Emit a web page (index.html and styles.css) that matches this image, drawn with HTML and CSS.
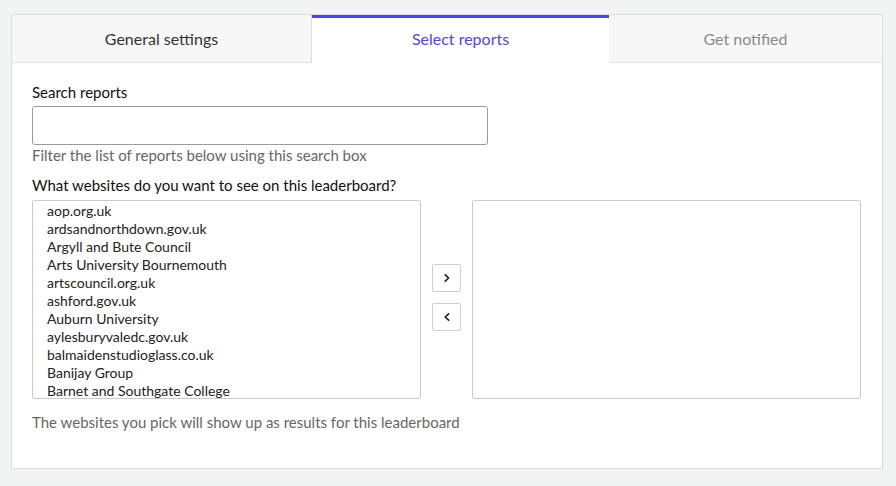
FILE: index.html
```html
<!DOCTYPE html>
<html>
<head>
<meta charset="utf-8">
<link rel="stylesheet" href="styles.css">
</head>
<body>
<div class="card">
  <div class="tabs">
    <div class="tab tab-first">General settings</div>
    <div class="tab tab-active">Select reports</div>
    <div class="tab tab-muted">Get notified</div>
  </div>
  <div class="content">
    <div class="label">Search reports</div>
    <div class="input"></div>
    <div class="help">Filter the list of reports below using this search box</div>
    <div class="label label-2">What websites do you want to see on this leaderboard?</div>
    <div class="picker">
      <div class="listbox">
        <div class="item">aop.org.uk</div>
        <div class="item">ardsandnorthdown.gov.uk</div>
        <div class="item">Argyll and Bute Council</div>
        <div class="item">Arts University Bournemouth</div>
        <div class="item">artscouncil.org.uk</div>
        <div class="item">ashford.gov.uk</div>
        <div class="item">Auburn University</div>
        <div class="item">aylesburyvaledc.gov.uk</div>
        <div class="item">balmaidenstudioglass.co.uk</div>
        <div class="item">Banijay Group</div>
        <div class="item">Barnet and Southgate College</div>
      </div>
      <div class="buttons">
        <div class="btn"><svg width="10" height="10" viewBox="0 0 10 10"><path d="M3.2 1.8 L6.6 5 L3.2 8.2" fill="none" stroke="#222" stroke-width="1.7" stroke-linecap="round" stroke-linejoin="round"/></svg></div>
        <div class="btn"><svg width="10" height="10" viewBox="0 0 10 10"><path d="M6.6 1.8 L3.2 5 L6.6 8.2" fill="none" stroke="#222" stroke-width="1.7" stroke-linecap="round" stroke-linejoin="round"/></svg></div>
      </div>
      <div class="listbox"></div>
    </div>
    <div class="help footer">The websites you pick will show up as results for this leaderboard</div>
  </div>
</div>
</body>
</html>
```
FILE: styles.css
```css
html, body {
  margin: 0;
  padding: 0;
}
body {
  background: #f2f3f3;
  font-family: Lato, "Open Sans", sans-serif;
  width: 896px;
  height: 486px;
  overflow: hidden;
}
.card {
  margin: 14px 0 0 11px;
  width: 870px;
  height: 453px;
  background: #fff;
  border: 1px solid #dcdcdc;
}
.tabs {
  display: flex;
  height: 48px;
}
.tab {
  display: flex;
  align-items: center;
  justify-content: center;
  font-size: 16px;
  color: #333;
  background: #f7f7f7;
  border-bottom: 1px solid #e3e3e3;
  box-sizing: border-box;
}
.tab-first {
  width: 300px;
  border-right: 1px solid #dcdcdc;
}
.tab-active {
  width: 297px;
  background: #fff;
  color: #4f46dc;
  border-top: 3px solid #4f46dc;
  border-bottom: none;
  padding-bottom: 4px;
}
.tab-muted {
  flex: 1;
  color: #8a8a8a;
}
.content {
  padding: 19px 20px 0 20px;
}
.label {
  font-size: 15px;
  line-height: 20px;
  color: #111;
}
.label-2 {
  margin-top: 10px;
}
.input {
  margin-top: 4px;
  width: 454px;
  height: 37px;
  border: 1px solid #9a9a9a;
  border-radius: 3px;
}
.help {
  font-size: 15px;
  line-height: 20px;
  color: #666;
}
.picker {
  display: flex;
  align-items: center;
  gap: 11px;
  margin-top: 5px;
}
.listbox {
  border: 1px solid #cbcbcb;
  border-radius: 2px;
  overflow: hidden;
  padding: 1px 0 1px 14px;
  box-sizing: content-box;
  width: 373px;
  height: 195px;
}
.item {
  font-size: 14px;
  line-height: 18px;
  color: #222;
}
.buttons {
  display: flex;
  flex-direction: column;
  gap: 11px;
  margin-top: -4px;
}
.btn {
  width: 27px;
  height: 26px;
  border: 1px solid #cfcfcf;
  border-radius: 2px;
  display: flex;
  align-items: center;
  justify-content: center;
}
.footer {
  margin-top: 13px;
}
```
